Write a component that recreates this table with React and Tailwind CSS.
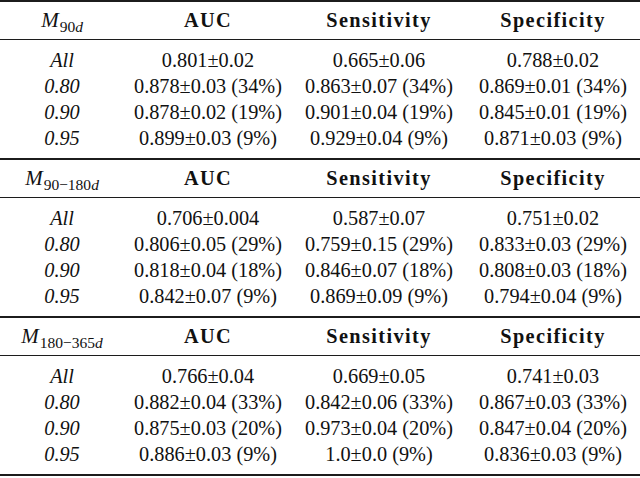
import React from "react";

const sections = [
  {
    sub: "90d",
    rows: [
      ["All", "0.801±0.02", "0.665±0.06", "0.788±0.02"],
      ["0.80", "0.878±0.03 (34%)", "0.863±0.07 (34%)", "0.869±0.01 (34%)"],
      ["0.90", "0.878±0.02 (19%)", "0.901±0.04 (19%)", "0.845±0.01 (19%)"],
      ["0.95", "0.899±0.03 (9%)", "0.929±0.04 (9%)", "0.871±0.03 (9%)"],
    ],
  },
  {
    sub: "90−180d",
    rows: [
      ["All", "0.706±0.004", "0.587±0.07", "0.751±0.02"],
      ["0.80", "0.806±0.05 (29%)", "0.759±0.15 (29%)", "0.833±0.03 (29%)"],
      ["0.90", "0.818±0.04 (18%)", "0.846±0.07 (18%)", "0.808±0.03 (18%)"],
      ["0.95", "0.842±0.07 (9%)", "0.869±0.09 (9%)", "0.794±0.04 (9%)"],
    ],
  },
  {
    sub: "180−365d",
    rows: [
      ["All", "0.766±0.04", "0.669±0.05", "0.741±0.03"],
      ["0.80", "0.882±0.04 (33%)", "0.842±0.06 (33%)", "0.867±0.03 (33%)"],
      ["0.90", "0.875±0.03 (20%)", "0.973±0.04 (20%)", "0.847±0.04 (20%)"],
      ["0.95", "0.886±0.03 (9%)", "1.0±0.0 (9%)", "0.836±0.03 (9%)"],
    ],
  },
];

const cols = "grid grid-cols-[124px_168px_174px_174px] items-center text-center";

const Sub = ({ text }) => {
  // digits and minus upright, the trailing d italic
  let head = text.slice(0, -1);
  return (
    <span className="text-[15.5px] relative top-[5px] ml-[1px]">
      <span className="not-italic">{head}</span>
      <span className="italic">d</span>
    </span>
  );
};

const Section = ({ sub, rows }) => (
  <div className="flex flex-col">
    <div className="h-[2px] bg-[#1c1c1c]" />
    <div className={`${cols} h-[37px]`}>
      <div className="text-[21px]">
        <span className="italic">M</span>
        <Sub text={sub} />
      </div>
      {["AUC", "Sensitivity", "Specificity"].map((h) => (
        <div key={h} className="font-bold tracking-[1.4px]">
          {h}
        </div>
      ))}
    </div>
    <div className="h-[1px] bg-[#1c1c1c]" />
    <div className="flex flex-col pt-[7px] pb-[7px]">
      {rows.map((r, i) => (
        <div key={i} className={`${cols} h-[26px]`}>
          <div className="italic">{r[0]}</div>
          <div>{r[1]}</div>
          <div>{r[2]}</div>
          <div>{r[3]}</div>
        </div>
      ))}
    </div>
  </div>
);

export default function App() {
  return (
    <div
      className="w-[640px] h-[478px] bg-white text-[#111] text-[20.3px] leading-none overflow-hidden"
      style={{ fontFamily: '"Liberation Serif", "DejaVu Serif", serif' }}
    >
      {sections.map((s) => (
        <Section key={s.sub} sub={s.sub} rows={s.rows} />
      ))}
      <div className="h-[2px] bg-[#1c1c1c]" />
    </div>
  );
}
